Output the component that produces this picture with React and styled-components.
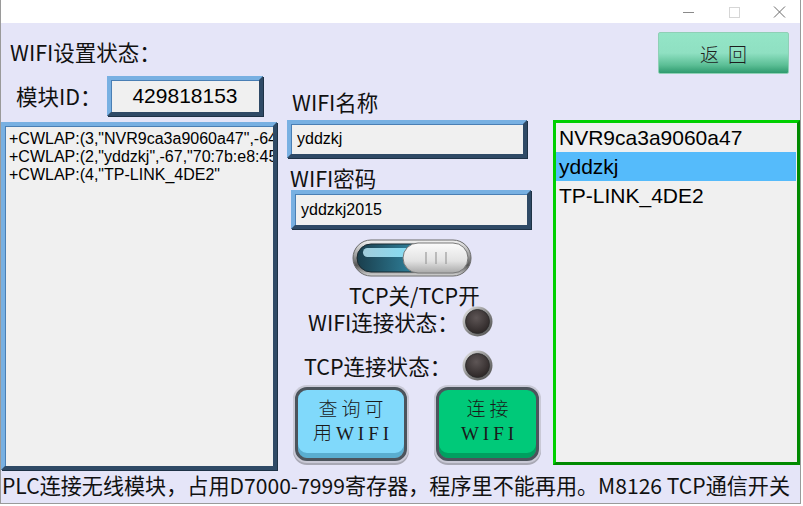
import React from "react";
import styled, { createGlobalStyle } from "styled-components";

const Global = createGlobalStyle`
  html, body { margin: 0; padding: 0; background: #ffffff; }
  body { font-family: "Noto Sans CJK SC", "Liberation Sans", sans-serif; color: #111; }
  * { box-sizing: border-box; }
`;

const Window = styled.div`
  width: 801px;
  height: 504px;
  border-left: 1px solid #9a9a9a;
  border-right: 1px solid #9a9a9a;
  border-bottom: 1px solid #9a9a9a;
  display: flex;
  flex-direction: column;
  overflow: hidden;
`;

const TitleBar = styled.div`
  height: 23px;
  background: #ffffff;
  display: flex;
  justify-content: flex-end;
  align-items: center;
  padding-right: 10px;
  gap: 23px;
`;

const Ctl = styled.svg`
  width: 22px;
  height: 20px;
  display: block;
`;

const Body = styled.div`
  flex: 1;
  background: #e5e5f8;
  display: flex;
  flex-direction: column;
`;

const Grid = styled.div`
  display: grid;
  grid-template-columns: 276px 254px 247px;
  column-gap: 11px;
  grid-template-rows: 53px 44px 350px;
  grid-template-areas:
    "title . back"
    "id name ."
    "log mid list";
`;

const Title = styled.div`
  grid-area: title;
  font-size: 21.5px;
  line-height: 26px;
  padding: 16px 0 0 9px;
  white-space: nowrap;
`;

const BackCell = styled.div`
  grid-area: back;
  display: flex;
  justify-content: flex-end;
  align-items: flex-start;
  padding: 9px 11px 0 0;
`;

const BackButton = styled.button`
  width: 131px;
  height: 42px;
  border: 1px solid #8fd0b6;
  border-radius: 2px;
  background: linear-gradient(to bottom, #94e5c7 0%, #8fe0c2 50%, #5cbf96 80%, #2e9a6e 100%);
  font-family: "Liberation Serif", "Noto Sans CJK SC", serif;
  font-size: 19px;
  letter-spacing: 9px;
  padding: 0 0 0 9px;
  color: #1d1d1d;
  font-weight: 300;
`;

const IdRow = styled.div`
  grid-area: id;
  display: flex;
  align-items: flex-start;
  padding-left: 15px;
`;

const IdLabel = styled.div`
  font-size: 21.5px;
  line-height: 26px;
  margin-top: 7px;
  width: 91px;
  white-space: nowrap;
`;

const Bevel = styled.div`
  background: #f0f0f0;
  border-style: solid;
  border-width: 4px;
  border-color: #78b0e2 #2f4a66 #2f4a66 #78b0e2;
  box-shadow: inset 1px 1px 0 #4a7fb4, 1px 1px 0 #1e3246;
`;

const IdBox = styled(Bevel)`
  width: 156px;
  height: 40px;
  display: flex;
  align-items: center;
  justify-content: center;
  font-family: "Liberation Sans", sans-serif;
  font-size: 21px;
  color: #000;
`;

const NameLabel = styled.div`
  grid-area: name;
  font-size: 21.5px;
  line-height: 26px;
  padding: 13px 0 0 4px;
  white-space: nowrap;
`;

const LogBox = styled(Bevel)`
  grid-area: log;
  margin-top: 2px;
  height: 348px;
  padding: 4px 0 0 4px;
  overflow: hidden;
  font-family: "Liberation Sans", sans-serif;
  font-size: 16px;
  line-height: 18px;
  white-space: pre;
  color: #000;
`;

const Mid = styled.div`
  grid-area: mid;
  margin-left: -1px;
  display: flex;
  flex-direction: column;
  align-items: flex-start;
`;

const Input = styled(Bevel)`
  width: 240px;
  height: ${(p) => p.$h}px;
  margin-left: ${(p) => p.$ml || 0}px;
  display: flex;
  align-items: center;
  padding-left: 6px;
  font-family: "Liberation Sans", sans-serif;
  font-size: 16px;
  color: #000;
`;

const Label = styled.div`
  font-size: 21.5px;
  line-height: ${(p) => p.$lh || 24}px;
  white-space: nowrap;
  margin-left: ${(p) => p.$ml || 0}px;
  margin-top: ${(p) => p.$mt || 0}px;
`;

const ToggleWrap = styled.div`
  display: flex;
  padding-left: 65px;
  margin-top: 10px;
`;

const StatusRow = styled.div`
  display: flex;
  align-items: center;
  margin-left: ${(p) => p.$ml}px;
  margin-top: ${(p) => p.$mt}px;
  gap: ${(p) => p.$gap}px;
`;

const ButtonRow = styled.div`
  display: flex;
  gap: 29px;
  margin-left: 8px;
  margin-top: 6px;
`;

const PanelButton = styled.button`
  width: ${(p) => p.$w}px;
  height: 74px;
  border: 3px solid #4c545c;
  border-radius: 12px;
  background: ${(p) => p.$bg};
  box-shadow: 0 0 0 2px #c9c9d6, inset 0 -5px 0 ${(p) => p.$shade}, 0 2px 0 2px #a8a8b4;
  font-family: "Liberation Serif", "Noto Sans CJK SC", serif;
  font-size: 19px;
  line-height: 24px;
  letter-spacing: 4px;
  color: #1a1a1a;
  font-weight: 300;
  padding: 0 0 4px 4px;
  white-space: pre;
`;

const List = styled.div`
  grid-area: list;
  height: 345px;
  border-style: solid;
  border-width: 3px;
  border-color: #00d000 #008a00 #008a00 #00d000;
  background: #f0f0f0;
`;

const ListItem = styled.div`
  height: 29px;
  line-height: 29px;
  padding-left: 3px;
  margin-right: 1px;
  font-family: "Liberation Sans", sans-serif;
  font-size: 21px;
  color: #000;
  background: ${(p) => (p.$sel ? "#55bbfb" : "transparent")};
`;

const Footer = styled.div`
  font-size: 21.1px;
  line-height: 28px;
  padding: 1px 0 0 1px;
  white-space: nowrap;
  overflow: hidden;
`;

function Toggle() {
  return (
    <svg width="120" height="38" viewBox="0 0 120 38">
      <defs>
        <linearGradient id="rim" x1="0" y1="0" x2="0" y2="1">
          <stop offset="0" stopColor="#f4f4f4" />
          <stop offset="0.45" stopColor="#9a9a9a" />
          <stop offset="0.7" stopColor="#555" />
          <stop offset="1" stopColor="#d8d8d8" />
        </linearGradient>
        <linearGradient id="track" x1="0" y1="0" x2="1" y2="0">
          <stop offset="0" stopColor="#1a3e4c" />
          <stop offset="0.5" stopColor="#2e7e98" />
          <stop offset="0.75" stopColor="#6ad6f4" />
          <stop offset="1" stopColor="#3a8fb0" />
        </linearGradient>
        <linearGradient id="hl" x1="0" y1="0" x2="1" y2="0">
          <stop offset="0" stopColor="#b0dcea" />
          <stop offset="1" stopColor="#8ee8ff" />
        </linearGradient>
        <linearGradient id="knob" x1="0" y1="0" x2="0" y2="1">
          <stop offset="0" stopColor="#fbfbfb" />
          <stop offset="0.6" stopColor="#e2e2e2" />
          <stop offset="1" stopColor="#a9a9a9" />
        </linearGradient>
      </defs>
      <rect x="1" y="1" width="118" height="36" rx="18" fill="url(#rim)" stroke="#6a6a6a" strokeWidth="1" />
      <rect x="5" y="5" width="110" height="28" rx="14" fill="url(#track)" stroke="#1b2a30" strokeWidth="1" />
      <rect x="11" y="9" width="48" height="9" rx="4.5" fill="url(#hl)" opacity="0.9" />
      <rect x="51" y="4" width="65" height="30" rx="15" fill="url(#knob)" stroke="#7a7a7a" strokeWidth="1" />
      <line x1="74" y1="13" x2="74" y2="25" stroke="#9a9a9a" strokeWidth="1.2" />
      <line x1="84" y1="13" x2="84" y2="25" stroke="#9a9a9a" strokeWidth="1.2" />
      <line x1="94" y1="13" x2="94" y2="25" stroke="#9a9a9a" strokeWidth="1.2" />
    </svg>
  );
}

function Led() {
  return (
    <svg width="31" height="31" viewBox="0 0 31 31">
      <defs>
        <linearGradient id="ledrim" x1="0" y1="0" x2="1" y2="1">
          <stop offset="0" stopColor="#f0f0f0" />
          <stop offset="0.5" stopColor="#8a8a8a" />
          <stop offset="1" stopColor="#4a4a4a" />
        </linearGradient>
        <radialGradient id="ledcore" cx="0.45" cy="0.35" r="0.7">
          <stop offset="0" stopColor="#5e5656" />
          <stop offset="1" stopColor="#2a2424" />
        </radialGradient>
      </defs>
      <circle cx="15.5" cy="15.5" r="15" fill="url(#ledrim)" />
      <circle cx="15.5" cy="15.5" r="12" fill="url(#ledcore)" stroke="#2a2a2a" strokeWidth="0.8" />
    </svg>
  );
}

const logLines = [
  '+CWLAP:(3,"NVR9ca3a9060a47",-64,"9c:a3:a9:06:0a:47",1)',
  '+CWLAP:(2,"yddzkj",-67,"70:7b:e8:45:2a:10",6)',
  '+CWLAP:(4,"TP-LINK_4DE2"',
].join("\n");

export default function App() {
  return (
    <>
      <Global />
      <Window>
        <TitleBar>
          <Ctl viewBox="0 0 22 20">
            <line x1="5" y1="10.5" x2="16" y2="10.5" stroke="#8a8a8a" strokeWidth="1" />
          </Ctl>
          <Ctl viewBox="0 0 22 20">
            <rect x="6.5" y="5.5" width="10" height="10" fill="none" stroke="#d6d6d6" strokeWidth="1" />
          </Ctl>
          <Ctl viewBox="0 0 22 20">
            <path d="M6 4.5 L17 15.5 M17 4.5 L6 15.5" stroke="#6a6a6a" strokeWidth="1" />
          </Ctl>
        </TitleBar>
        <Body>
          <Grid>
            <Title>WIFI设置状态：</Title>
            <BackCell>
              <BackButton>返回</BackButton>
            </BackCell>
            <IdRow>
              <IdLabel>模块ID：</IdLabel>
              <IdBox>429818153</IdBox>
            </IdRow>
            <NameLabel>WIFI名称</NameLabel>
            <LogBox>{logLines}</LogBox>
            <Mid>
              <Input $h={38}>yddzkj</Input>
              <Label $ml={3} $mt={8}>WIFI密码</Label>
              <Input $h={39} $ml={4}>yddzkj2015</Input>
              <ToggleWrap>
                <Toggle />
              </ToggleWrap>
              <Label $ml={62} $mt={5} $lh={26}>TCP关/TCP开</Label>
              <StatusRow $ml={21} $mt={-2} $gap={3}>
                <Label>WIFI连接状态：</Label>
                <Led />
              </StatusRow>
              <StatusRow $ml={17} $mt={13} $gap={11}>
                <Label>TCP连接状态：</Label>
                <Led />
              </StatusRow>
              <ButtonRow>
                <PanelButton $w={112} $bg="#80d9fb" $shade="#5aaed0">{"查询可\n用WIFI"}</PanelButton>
                <PanelButton $w={103} $bg="#00c979" $shade="#00a060">{"连接\nWIFI"}</PanelButton>
              </ButtonRow>
            </Mid>
            <List>
              <ListItem>NVR9ca3a9060a47</ListItem>
              <ListItem $sel>yddzkj</ListItem>
              <ListItem>TP-LINK_4DE2</ListItem>
            </List>
          </Grid>
          <Footer>PLC连接无线模块，占用D7000-7999寄存器，程序里不能再用。M8126 TCP通信开关</Footer>
        </Body>
      </Window>
    </>
  );
}
